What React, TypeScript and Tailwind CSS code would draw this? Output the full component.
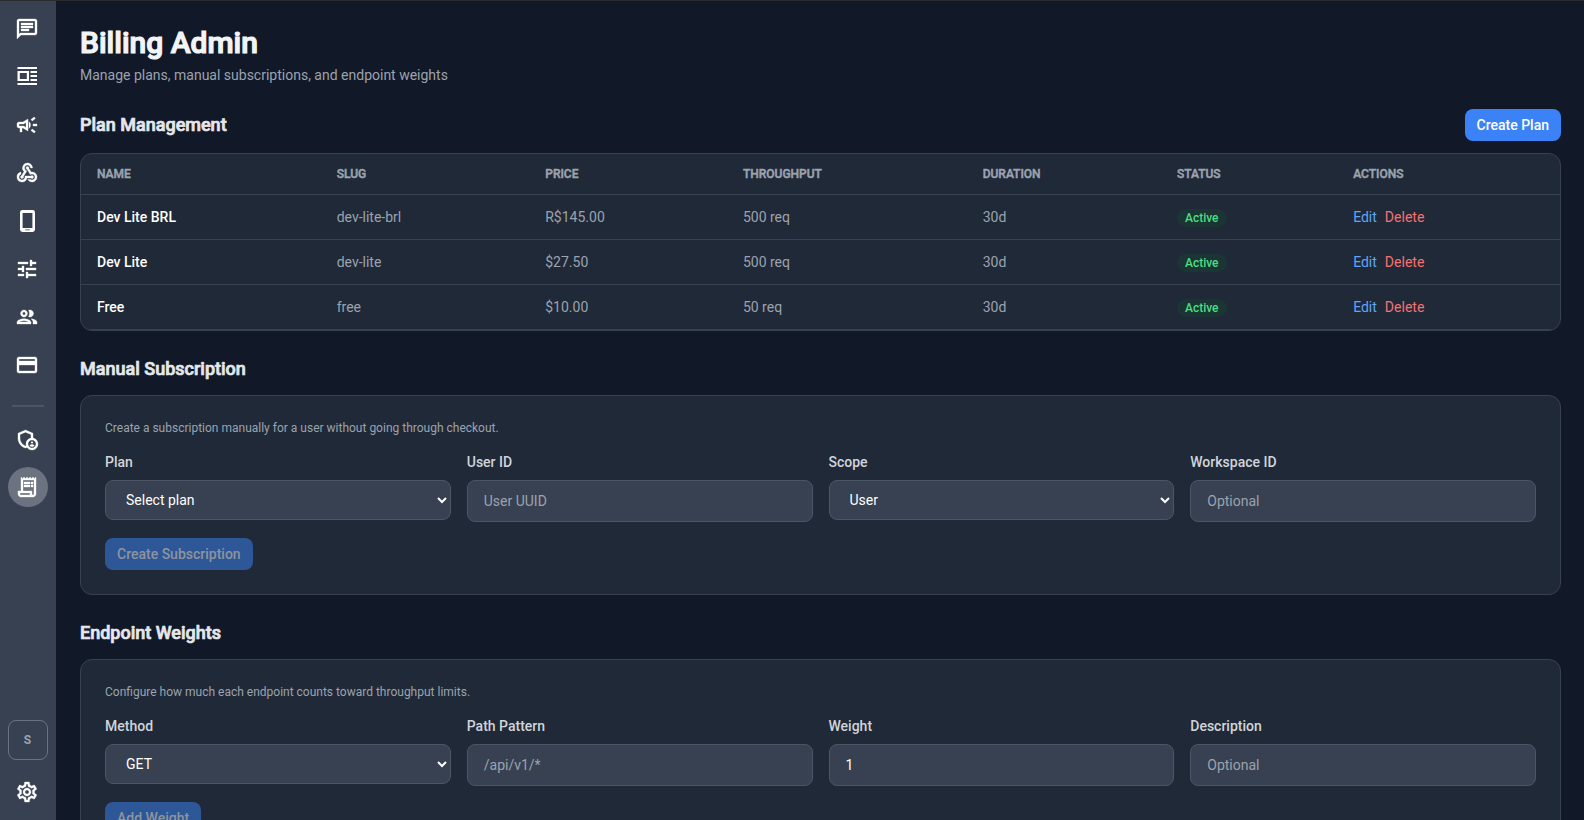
import { useState } from 'react';
import type { ReactNode } from 'react';
import {
  MdOutlineChat,
  MdOutlineCampaign,
  MdWebhook,
  MdTune,
  MdOutlineGroup,
  MdOutlineCreditCard,
  MdOutlineAdminPanelSettings,
  MdOutlineReceiptLong,
  MdOutlineSettings,
} from 'react-icons/md';

const plans = [
  { name: 'Dev Lite BRL', slug: 'dev-lite-brl', price: 'R$145.00', throughput: '500 req', duration: '30d' },
  { name: 'Dev Lite', slug: 'dev-lite', price: '$27.50', throughput: '500 req', duration: '30d' },
  { name: 'Free', slug: 'free', price: '$10.00', throughput: '50 req', duration: '30d' },
];

const columns = ['Name', 'Slug', 'Price', 'Throughput', 'Duration', 'Status', 'Actions'];

const inputClass =
  'block w-full rounded-lg border border-[#4b5563] bg-[#374151] px-4 py-2.5 text-sm text-white placeholder:text-[#9ca3af]';
const selectClass =
  'block h-10 w-full rounded-lg border border-[#4b5563] bg-[#374151] px-4 text-sm text-white';

function NewsIcon() {
  return (
    <svg viewBox="0 0 24 24" className="h-6 w-6" fill="currentColor" aria-hidden="true">
      <path
        d="M2.500 2h19.500v2H2.500zM2.500 18h19.500v2H2.500zM2.500 6h11.500v10H2.500zM4.800 8v6h7V8zM15.500 6h6.500v2h-6.500zM15.500 10h6.500v2h-6.500zM15.500 14h6.500v2h-6.500z"
        fillRule="evenodd"
      />
    </svg>
  );
}

function MobileIcon() {
  return (
    <svg viewBox="0 0 24 24" className="h-6 w-6" fill="currentColor" aria-hidden="true">
      <path
        d="M7.400 1h10.200a2.400 2.400 0 0 1 2.400 2.400v17.200a2.400 2.400 0 0 1-2.400 2.400H7.400a2.400 2.400 0 0 1-2.400-2.400V3.400A2.400 2.400 0 0 1 7.400 1zM7.600 4v15h9.800V4zM10.200 20.400v.9h4.600v-.9z"
        fillRule="evenodd"
      />
    </svg>
  );
}

function NavItem({ label, active, children }: { label: string; active?: boolean; children: ReactNode }) {
  return (
    <a
      href="#"
      aria-label={label}
      className={`flex h-10 w-10 items-center justify-center rounded-full pr-0.5 text-2xl text-white [&_path:not([fill=none])]:[stroke-width:0.35] ${active ? 'bg-[#6b7280]' : ''}`}
    >
      {children}
    </a>
  );
}

function Sidebar() {
  return (
    <nav className="flex w-14 shrink-0 flex-col items-center bg-[#374151] py-2">
      <div className="flex flex-col gap-2">
        <NavItem label="Chat"><MdOutlineChat /></NavItem>
        <NavItem label="News"><NewsIcon /></NavItem>
        <NavItem label="Campaigns"><MdOutlineCampaign /></NavItem>
        <NavItem label="Webhooks"><MdWebhook /></NavItem>
        <NavItem label="Devices"><MobileIcon /></NavItem>
        <NavItem label="Preferences"><MdTune /></NavItem>
        <NavItem label="Users"><MdOutlineGroup /></NavItem>
        <NavItem label="Payments"><MdOutlineCreditCard /></NavItem>
      </div>
      <div className="mt-5 mb-3 h-0.5 w-8 bg-[#4b5563]" />
      <div className="flex flex-col gap-2">
        <NavItem label="Admin"><MdOutlineAdminPanelSettings /></NavItem>
        <NavItem label="Billing" active><MdOutlineReceiptLong /></NavItem>
      </div>
      <div className="mt-auto flex flex-col gap-3">
        <button
          type="button"
          className="flex h-10 w-10 items-center justify-center rounded-lg border border-[#6b7280] pr-px text-xs font-bold text-[#9ca3af]"
        >
          S
        </button>
        <NavItem label="Settings"><MdOutlineSettings /></NavItem>
      </div>
    </nav>
  );
}

function SectionTitle({ children }: { children: ReactNode }) {
  return (
    <h2 className="text-lg font-medium text-[#e5e7eb] [-webkit-text-stroke:0.04em_currentColor]">{children}</h2>
  );
}

function Field({ id, label, children }: { id: string; label: string; children: ReactNode }) {
  return (
    <div>
      <label htmlFor={id} className="mb-2 block text-sm font-medium text-[#d1d5db]">
        {label}
      </label>
      {children}
    </div>
  );
}

function PlanTable() {
  return (
    <div className="overflow-hidden rounded-xl border border-[#374151] bg-[#1f2937]">
      <table className="w-full text-left text-sm">
        <thead>
          <tr className="border-b border-[#374151]">
            {columns.map((column) => (
              <th
                key={column}
                className="px-4 py-3 text-xs font-medium text-[#9ca3af] uppercase [-webkit-text-stroke:0.04em_currentColor]"
              >
                {column}
              </th>
            ))}
          </tr>
        </thead>
        <tbody>
          {plans.map((plan) => (
            <tr key={plan.slug} className="border-b border-[#374151] text-[#9ca3af]">
              <td className="px-4 py-3 font-medium text-white">{plan.name}</td>
              <td className="px-4 py-3">{plan.slug}</td>
              <td className="px-4 py-3">{plan.price}</td>
              <td className="px-4 py-3">{plan.throughput}</td>
              <td className="px-4 py-3">{plan.duration}</td>
              <td className="px-4 py-3">
                <span className="rounded-full bg-[#14532d]/30 px-2 py-0.5 text-xs font-medium text-[#4ade80]">Active</span>
              </td>
              <td className="px-4 py-3">
                <div className="flex gap-2">
                  <button type="button" className="text-[#60a5fa]">Edit</button>
                  <button type="button" className="text-[#f87171]">Delete</button>
                </div>
              </td>
            </tr>
          ))}
        </tbody>
      </table>
    </div>
  );
}

export default function App() {
  const [plan, setPlan] = useState('');
  const [scope, setScope] = useState('user');
  const [method, setMethod] = useState('GET');

  return (
    <div className="flex h-screen border-t border-[#2b2b2f] bg-[#111827] font-[Roboto,sans-serif]">
      <Sidebar />
      <main className="flex min-w-0 flex-1 flex-col gap-6 overflow-y-auto py-6 pr-[23px] pl-6 [scrollbar-width:none]">
        <header>
          <h1 className="text-3xl font-medium text-[#f3f4f6] [-webkit-text-stroke:0.04em_currentColor]">Billing Admin</h1>
          <p className="mt-1 text-sm text-[#9ca3af]">Manage plans, manual subscriptions, and endpoint weights</p>
        </header>

        <section>
          <div className="mb-3 flex items-center justify-between">
            <SectionTitle>Plan Management</SectionTitle>
            <button type="button" className="h-8 rounded-lg bg-[#3b82f6] px-3 text-sm font-medium text-white">
              Create Plan
            </button>
          </div>
          <PlanTable />
        </section>

        {/* Manual subscription */}
        <section className="flex flex-col gap-3">
          <SectionTitle>Manual Subscription</SectionTitle>
          <form className="rounded-xl border border-[#374151] bg-[#1f2937] p-6">
            <p className="mb-4 text-xs text-[#9ca3af]">
              Create a subscription manually for a user without going through checkout.
            </p>
            <div className="grid grid-cols-4 gap-4">
              <Field id="plan" label="Plan">
                <select id="plan" value={plan} onChange={(e) => setPlan(e.target.value)} className={selectClass}>
                  <option value="">Select plan</option>
                  {plans.map((p) => (
                    <option key={p.slug} value={p.slug}>{p.name}</option>
                  ))}
                </select>
              </Field>
              <Field id="user-id" label="User ID">
                <input id="user-id" type="text" placeholder="User UUID" className={inputClass} />
              </Field>
              <Field id="scope" label="Scope">
                <select id="scope" value={scope} onChange={(e) => setScope(e.target.value)} className={selectClass}>
                  <option value="user">User</option>
                  <option value="workspace">Workspace</option>
                </select>
              </Field>
              <Field id="workspace-id" label="Workspace ID">
                <input id="workspace-id" type="text" placeholder="Optional" className={inputClass} />
              </Field>
            </div>
            <button
              type="button"
              disabled
              className="mt-4 h-8 rounded-lg bg-[#2d5797] px-3 text-sm font-medium text-[#8d949e]"
            >
              Create Subscription
            </button>
          </form>
        </section>

        {/* Endpoint weights */}
        <section className="flex flex-col gap-3">
          <SectionTitle>Endpoint Weights</SectionTitle>
          <form className="rounded-xl border border-[#374151] bg-[#1f2937] p-6">
            <p className="mb-4 text-xs text-[#9ca3af]">
              Configure how much each endpoint counts toward throughput limits.
            </p>
            <div className="grid grid-cols-4 gap-4">
              <Field id="method" label="Method">
                <select id="method" value={method} onChange={(e) => setMethod(e.target.value)} className={selectClass}>
                  <option>GET</option>
                  <option>POST</option>
                  <option>PUT</option>
                  <option>DELETE</option>
                </select>
              </Field>
              <Field id="path" label="Path Pattern">
                <input id="path" type="text" placeholder="/api/v1/*" className={inputClass} />
              </Field>
              <Field id="weight" label="Weight">
                <input id="weight" type="text" inputMode="numeric" defaultValue="1" className={inputClass} />
              </Field>
              <Field id="description" label="Description">
                <input id="description" type="text" placeholder="Optional" className={inputClass} />
              </Field>
            </div>
            <button
              type="button"
              disabled
              className="mt-4 h-8 rounded-lg bg-[#2d5797] px-3 text-sm font-medium text-[#8d949e]"
            >
              Add Weight
            </button>
          </form>
        </section>
      </main>
    </div>
  );
}
